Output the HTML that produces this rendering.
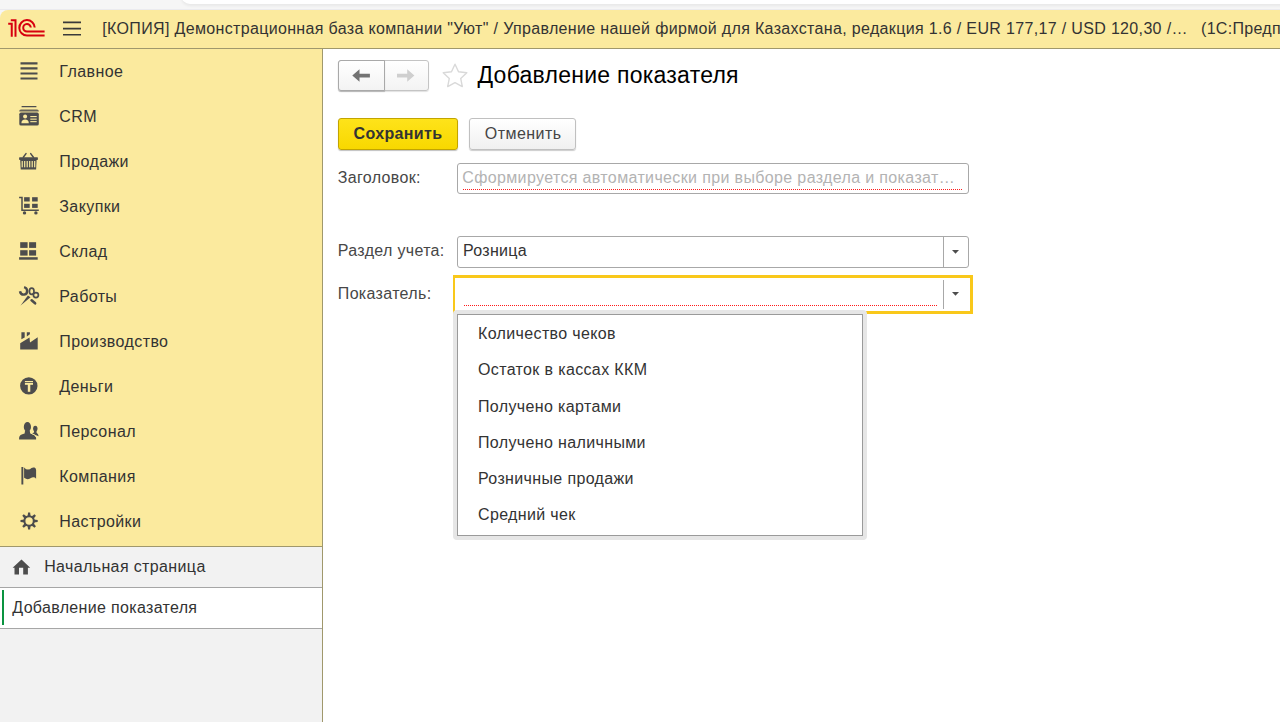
<!DOCTYPE html>
<html><head><meta charset="utf-8">
<style>
*{box-sizing:border-box;margin:0;padding:0}
html,body{width:1280px;height:722px;overflow:hidden;background:#fff;font-family:"Liberation Sans",sans-serif;font-size:16px;color:#333}
.a{position:absolute}
.t{position:absolute;white-space:nowrap;line-height:20px;letter-spacing:0.3px}
#topstrip{left:0;top:0;width:1280px;height:10px;background:#f6f6f6}
#tab{left:181px;top:-10px;width:1110px;height:13.7px;background:#fff;border-radius:0 0 0 9px;box-shadow:0 2px 3px rgba(0,0,0,0.06)}
#tline{left:0;top:9px;width:1280px;height:1px;background:#ebebef}
#cornerbg{left:0;top:10px;width:12px;height:12px;background:#f6f6f6}
#header{left:0;top:10px;width:1280px;height:38px;background:#fbea9e;border-top-left-radius:8px}
#hline{left:0;top:48px;width:1280px;height:1px;background:#a0986c}
#side{left:0;top:49px;width:322px;height:497px;background:#fbea9e}
#sline{left:0;top:546px;width:322px;height:1px;background:#a0986c}
#vline{left:322px;top:49px;width:1px;height:673px;background:#a0986c}
#lower{left:0;top:547px;width:322px;height:175px;background:#f2f2f2}
#row2{left:0;top:588px;width:322px;height:40px;background:#fff}
#b1{left:0;top:587px;width:322px;height:1px;background:#a6a6a6}
#b2{left:0;top:628px;width:322px;height:1px;background:#a6a6a6}
#green{left:2px;top:590px;width:2px;height:35px;background:#0a9440}
.ic{position:absolute;left:15px;width:30px;height:28px}
.si{left:59.3px;color:#333;letter-spacing:0.4px}
</style></head><body>
<div id="topstrip" class="a"></div>
<div id="tab" class="a"></div>
<div id="tline" class="a"></div>
<div id="cornerbg" class="a"></div>
<div id="header" class="a"></div>
<div id="hline" class="a"></div>
<div id="side" class="a"></div>
<div id="sline" class="a"></div>
<div id="lower" class="a"></div>
<div id="row2" class="a"></div>
<div id="b1" class="a"></div>
<div id="b2" class="a"></div>
<div id="green" class="a"></div>
<div id="vline" class="a"></div>

<!-- header -->
<svg class="a" style="left:5px;top:14px" width="45" height="26" viewBox="0 0 45 26">
 <g fill="none" stroke="#d7000f" stroke-width="2">
  <path d="M5.8 6.2H11.5M10.5 5.2V22.8M3.2 9.7H7.7M6.75 9.7V22.8"/>
  <path d="M29.7 13.5A7.7 7.7 0 1 0 22 21.5H39.6"/>
  <path d="M25.8 13.5A3.8 3.8 0 1 0 22 17.6H39.6"/>
 </g>
</svg>
<svg class="a" style="left:55px;top:14px" width="35" height="26" viewBox="0 0 35 26">
 <g stroke="#3a3a3a" stroke-width="1.6"><path d="M8 8.4H26M8 14.6H26M8 20.8H26"/></g>
</svg>
<div class="t" style="left:102.3px;top:19px;color:#333;letter-spacing:0.34px">[КОПИЯ] Демонстрационная база компании "Уют" / Управление нашей фирмой для Казахстана, редакция 1.6 / EUR 177,17 / USD 120,30 /…</div>
<div class="t" style="left:1201px;top:19px;color:#333">(1С:Предприятие)</div>


<!-- sidebar -->
<svg class="ic" style="top:57px" viewBox="0 0 30 28"><g stroke="#4d4d4d" stroke-width="2.2"><path d="M5.5 6.4H22.5M5.5 11.4H22.5M5.5 16.5H22.5M5.5 21.5H22.5"/></g></svg>
<div class="t si" style="top:62px">Главное</div>
<svg class="ic" style="top:102px" viewBox="0 0 30 28"><g fill="#4d4d4d">
 <rect x="6.5" y="4" width="15" height="1.2" rx=".5"/>
 <path d="M4.2 9.2Q4.2 7.4 6 7.4H22Q23.8 7.4 23.8 9.2V9.4H4.2Z" opacity=".85"/>
 <path d="M4.3 12.2Q4.3 10.5 6 10.5H22.1Q23.8 10.5 23.8 12.2V21.9Q23.8 23.6 22.1 23.6H6Q4.3 23.6 4.3 21.9Z"/>
 </g><g fill="#fbea9e"><circle cx="10.1" cy="14.4" r="2"/><path d="M6.4 21.3Q6.4 17.6 10.1 17.6Q13.8 17.6 13.8 21.3Z"/><rect x="15.3" y="14" width="6.4" height="1.1"/><rect x="15.3" y="16.6" width="6.4" height="1.1"/><rect x="15.3" y="19.1" width="6.4" height="1.1"/></g></svg>
<div class="t si" style="top:107px">CRM</div>
<svg class="ic" style="top:147px" viewBox="0 0 30 28"><g fill="#4d4d4d">
 <rect x="4.1" y="10.3" width="18.8" height="2.6" rx=".6"/>
 <path d="M5.2 12.8H21.6L21.1 22.5H5.7Z"/>
 </g><g stroke="#4d4d4d" stroke-width="1.5" stroke-linecap="round"><path d="M8.3 10.2L11 6.6M18.4 10.2L15.7 6.6"/></g>
 <g fill="#fbea9e"><rect x="6.6" y="14" width="1.2" height="6.3"/><rect x="9.1" y="14" width="1.2" height="6.3"/><rect x="11.6" y="14" width="1.2" height="6.3"/><rect x="14.1" y="14" width="1.2" height="6.3"/><rect x="16.6" y="14" width="1.2" height="6.3"/><rect x="19.1" y="14" width="1.2" height="6.3"/></g></svg>
<div class="t si" style="top:152px">Продажи</div>
<svg class="ic" style="top:192px" viewBox="0 0 30 28"><g fill="#4d4d4d">
 <rect x="9.1" y="5.2" width="5.6" height="4.3"/><rect x="17.1" y="5.2" width="5.6" height="4.3"/>
 <rect x="9.1" y="11.8" width="5.6" height="4.1"/><rect x="17.1" y="11.8" width="5.6" height="4.1"/>
 <circle cx="9.5" cy="20.9" r="1.7"/><circle cx="20.9" cy="20.9" r="1.7"/></g>
 <path d="M4.1 5.6H7V18.2H23.8" fill="none" stroke="#4d4d4d" stroke-width="1.5"/></svg>
<div class="t si" style="top:197px">Закупки</div>
<svg class="ic" style="top:237px" viewBox="0 0 30 28"><g fill="#4d4d4d">
 <rect x="5.2" y="5.2" width="7.4" height="5.7"/><rect x="14.1" y="5.2" width="7" height="5.7"/>
 <rect x="5.2" y="13.2" width="7.4" height="5.4"/><rect x="14.1" y="13.2" width="7" height="5.4"/>
 <rect x="4.1" y="20.2" width="18.6" height="2.5"/></g></svg>
<div class="t si" style="top:242px">Склад</div>
<svg class="ic" style="top:282px" viewBox="0 0 30 28"><g fill="none" stroke="#4d4d4d">
 <path d="M5 9.2Q5.6 12.9 9.2 12.6Q12.6 12 12.1 8.4Q11.7 6 9.1 5.2" stroke-width="2.4"/>
 <ellipse cx="16.7" cy="9.2" rx="2.3" ry="3.1" stroke-width="1.7"/><ellipse cx="20.9" cy="13.1" rx="2.5" ry="2.5" stroke-width="1.7"/>
 </g><g fill="#4d4d4d"><path d="M5.6 23.4L12.9 13.4L15.5 15.3Z"/></g>
 <path d="M16.6 18.3L20.1 21.3" stroke="#4d4d4d" stroke-width="2.6" stroke-linecap="round"/></svg>
<div class="t si" style="top:287px">Работы</div>
<svg class="ic" style="top:327px" viewBox="0 0 30 28"><g fill="#4d4d4d">
 <path d="M6.4 5.2H9.7V10.4L6.4 12.2Z"/><path d="M11.8 5.2H14.9V7.2L11.8 9.5Z"/>
 <path d="M5.2 16.3L14.5 10.4L15 15.6L22.7 10.3V22.5H5.2Z"/></g></svg>
<div class="t si" style="top:332px">Производство</div>
<svg class="ic" style="top:372px" viewBox="0 0 30 28"><circle cx="13.8" cy="13.9" r="8.7" fill="#4d4d4d"/><g fill="#fbea9e"><rect x="9.9" y="9" width="8.1" height="1.2"/><rect x="9.9" y="11" width="8.1" height="1.8"/><rect x="12.8" y="12" width="2.5" height="7.8"/></g></svg>
<div class="t si" style="top:377px">Деньги</div>
<svg class="ic" style="top:417px" viewBox="0 0 30 28"><g fill="#4d4d4d">
 <ellipse cx="12.4" cy="9.9" rx="3.6" ry="4.8"/><path d="M10 14H14.8L15.2 16.5Q20.8 17.6 21.1 20.8V22.5H4.1V20.8Q4.4 17.6 9.6 16.5Z"/>
 <ellipse cx="20.3" cy="11.6" rx="2.2" ry="2.9"/><path d="M19 14H21.5L21.6 15.8Q23.5 17 23.6 19.2L16.8 16.5L19 15.6Z"/></g>
 <path d="M16 16.3Q20.5 17.4 21.7 20.8" stroke="#fbea9e" stroke-width="1" fill="none"/></svg>
<div class="t si" style="top:422px">Персонал</div>
<svg class="ic" style="top:462px" viewBox="0 0 30 28"><g fill="#4d4d4d">
 <rect x="6.4" y="5" width="1.9" height="17.5"/>
 <path d="M9.1 5.4Q11 7.6 13 7.6Q15 7.6 16.5 6Q18 5 19.5 5.6Q21.1 6.2 21.1 8V16.7Q19.8 15 18 15.3Q16.5 15.6 14.5 16.8Q12 17.8 9.1 15.8Z"/></g></svg>
<div class="t si" style="top:467px">Компания</div>
<svg class="ic" style="top:507px" viewBox="0 0 30 28"><g fill="#4d4d4d"><polygon points="18.60,15.50 22.70,15.05 22.70,12.95 18.60,12.50"/><polygon points="16.22,18.24 19.44,20.82 20.92,19.34 18.34,16.12"/><polygon points="12.60,18.50 13.05,22.60 15.15,22.60 15.60,18.50"/><polygon points="9.86,16.12 7.28,19.34 8.76,20.82 11.98,18.24"/><polygon points="9.60,12.50 5.50,12.95 5.50,15.05 9.60,15.50"/><polygon points="11.98,9.76 8.76,7.18 7.28,8.66 9.86,11.88"/><polygon points="15.60,9.50 15.15,5.40 13.05,5.40 12.60,9.50"/><polygon points="18.34,11.88 20.92,8.66 19.44,7.18 16.22,9.76"/></g><circle cx="14.1" cy="14" r="4.75" fill="none" stroke="#4d4d4d" stroke-width="2.1"/></svg>
<div class="t si" style="top:512px">Настройки</div>

<svg class="a" style="left:6px;top:552px" width="30" height="28" viewBox="0 0 30 28"><path fill="#4d4d4d" d="M15.5 7.6L24.2 15.7H21.9V22.5H17.2V15.7H13V22.5H8.5V15.7H6.6Z"/></svg>
<div class="t" style="left:44.2px;top:557px;color:#333;letter-spacing:0.37px">Начальная страница</div>
<div class="t" style="left:12.3px;top:598px;color:#333;letter-spacing:0.33px">Добавление показателя</div>

<!-- form -->
<div class="a" style="left:338px;top:60px;width:91px;height:31px;border:1px solid #c4c4c4;border-radius:3px;background:linear-gradient(#fff,#f3f3f3);box-shadow:0 1px 1px rgba(0,0,0,0.12)"></div>
<div class="a" style="left:338px;top:60px;width:47px;height:31px;border:1px solid #a9a9a9;border-radius:3px 0 0 3px;background:linear-gradient(#fff,#f3f3f3);box-shadow:0 1px 1px rgba(0,0,0,0.2)"></div>
<svg class="a" style="left:338px;top:60px" width="91" height="31" viewBox="0 0 91 31">
 <path d="M14.3 15.5L21.5 9.2V13.7H31.9V17.4H21.5V21.8Z" fill="#737373"/>
 <path d="M76.4 15.5L69.2 9.2V13.7H59V17.4H69.2V21.8Z" fill="#cfcfcf"/>
</svg>
<svg class="a" style="left:440px;top:60px" width="30" height="30" viewBox="0 0 30 30">
 <path d="M15.00 4.20L18.53 11.75L26.79 12.77L20.71 18.45L22.29 26.63L15.00 22.60L7.71 26.63L9.29 18.45L3.21 12.77L11.47 11.75Z" fill="none" stroke="#d9d9d9" stroke-width="1.4" stroke-linejoin="round"/>
</svg>
<div class="t" style="left:477.5px;top:62px;font-size:23px;line-height:26px;color:#000;letter-spacing:0.25px">Добавление показателя</div>

<div class="a" style="left:338px;top:118px;width:120px;height:32px;border:1px solid #c2a400;border-radius:3px;background:linear-gradient(#fee31a,#f8d800);box-shadow:0 1px 1px rgba(0,0,0,0.25)"></div>
<div class="t" style="left:353.5px;top:124px;font-weight:bold;color:#333;letter-spacing:0.36px">Сохранить</div>
<div class="a" style="left:469px;top:118px;width:107px;height:32px;border:1px solid #c0c0c0;border-radius:3px;background:linear-gradient(#fff,#f0f0f0);box-shadow:0 1px 1px rgba(0,0,0,0.2)"></div>
<div class="t" style="left:484.8px;top:124px;color:#454545;letter-spacing:0.45px">Отменить</div>

<div class="t" style="left:337.8px;top:168px;color:#474747;letter-spacing:0.33px">Заголовок:</div>
<div class="a" style="left:457px;top:163px;width:512px;height:31px;border:1px solid #a8a8a8;border-radius:3px;background:#fff"></div>
<div class="t" style="left:462.3px;top:168px;color:#b3b3b3;letter-spacing:0.36px">Сформируется автоматически при выборе раздела и показат…</div>
<svg class="a" style="left:463px;top:189px" width="500" height="1"><line x1="0" y1="0.5" x2="500" y2="0.5" stroke="#ff1a1a" stroke-width="1" stroke-dasharray="1 1" shape-rendering="crispEdges"/></svg>

<div class="t" style="left:337.8px;top:241px;color:#474747;letter-spacing:0.33px">Раздел учета:</div>
<div class="a" style="left:457px;top:236px;width:512px;height:32px;border:1px solid #a8a8a8;border-radius:3px;background:#fff"></div>
<div class="a" style="left:943px;top:237px;width:1px;height:30px;background:#a8a8a8"></div>
<svg class="a" style="left:951px;top:248.5px" width="9" height="6" viewBox="0 0 9 6"><path d="M1 1H8L4.5 4.8Z" fill="#4d4d4d"/></svg>
<div class="t" style="left:463px;top:241px;color:#333">Розница</div>

<div class="t" style="left:337.8px;top:284px;color:#474747;letter-spacing:0.33px">Показатель:</div>
<div class="a" style="left:453px;top:275px;width:520px;height:39px;border:solid #f9c81a;border-width:3px 3px 3px 2px;background:#fff"></div>
<div class="a" style="left:943px;top:280px;width:1px;height:29px;background:#a8a8a8"></div>
<svg class="a" style="left:951px;top:290.5px" width="9" height="6" viewBox="0 0 9 6"><path d="M1 1H8L4.5 4.8Z" fill="#4d4d4d"/></svg>
<svg class="a" style="left:464px;top:305px" width="474" height="1"><line x1="0" y1="0.5" x2="474" y2="0.5" stroke="#ff1a1a" stroke-width="1" stroke-dasharray="1 1" shape-rendering="crispEdges"/></svg>

<div class="a" style="left:453px;top:310px;width:414px;height:230px;background:#e6e6e6;border-radius:4px"></div>
<div class="a" style="left:457px;top:314px;width:406px;height:222px;border:1px solid #9a9a9a;background:#fff"></div>
<div class="t" style="left:478px;top:324px;color:#333;letter-spacing:0.36px">Количество чеков</div>
<div class="t" style="left:478px;top:360px;color:#333;letter-spacing:0.36px">Остаток в кассах ККМ</div>
<div class="t" style="left:478px;top:397px;color:#333;letter-spacing:0.36px">Получено картами</div>
<div class="t" style="left:478px;top:433px;color:#333;letter-spacing:0.36px">Получено наличными</div>
<div class="t" style="left:478px;top:469px;color:#333;letter-spacing:0.36px">Розничные продажи</div>
<div class="t" style="left:478px;top:505px;color:#333;letter-spacing:0.36px">Средний чек</div>
</body></html>
